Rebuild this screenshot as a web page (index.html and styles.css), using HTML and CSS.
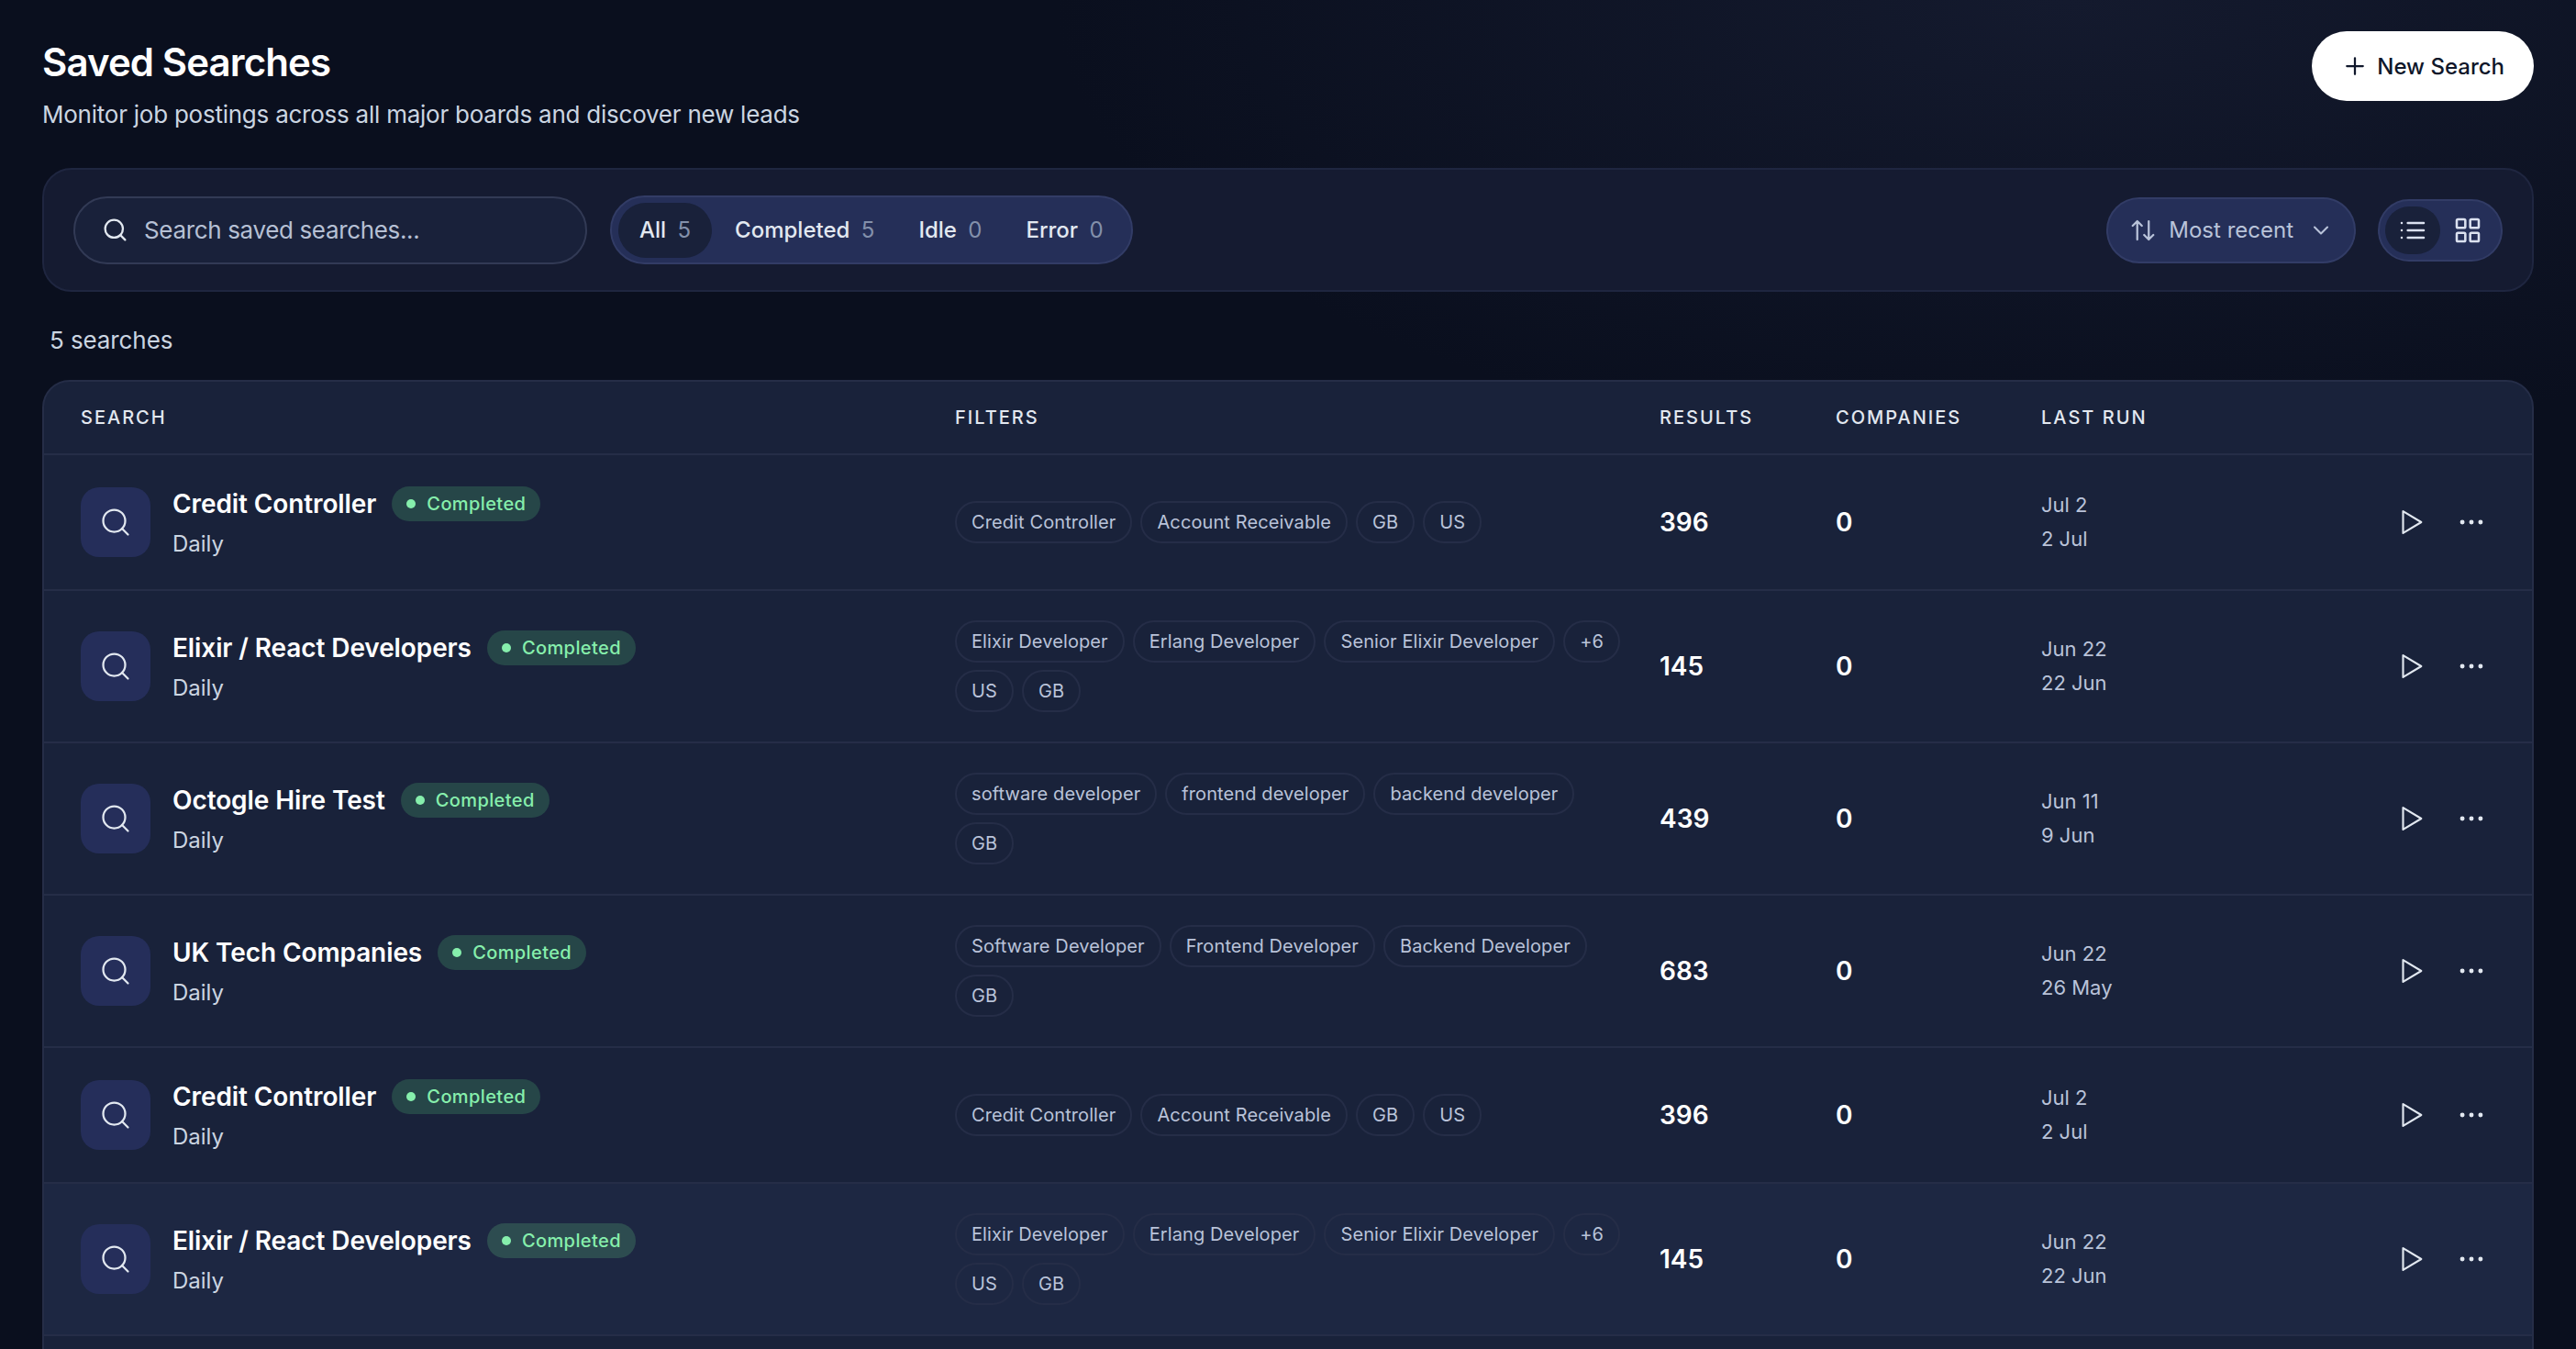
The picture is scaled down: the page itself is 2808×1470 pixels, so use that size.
FILE: index.html
```html
<!DOCTYPE html>
<html lang="en">
<head>
    <meta charset="UTF-8">
    <title>Saved Searches</title>
    <link rel="stylesheet" href="styles.css">
</head>
<body>
    <svg class="sprite" xmlns="http://www.w3.org/2000/svg">
        <symbol id="i-search" viewBox="0 0 24 24"><circle cx="11" cy="11" r="8"/><path d="m21 21-4.3-4.3"/></symbol>
        <symbol id="i-play" viewBox="0 0 24 24"><path d="M6 3.6 20 12 6 20.4z"/></symbol>
        <symbol id="i-more" viewBox="0 0 24 24"><circle cx="5" cy="12" r="1"/><circle cx="12" cy="12" r="1"/><circle cx="19" cy="12" r="1"/></symbol>
    </svg>

    <div class="page">
        <header class="page-head">
            <div>
                <h1 class="page-title">Saved Searches</h1>
                <p class="page-sub">Monitor job postings across all major boards and discover new leads</p>
            </div>
            <button class="new-btn">
                <svg class="icon icon-new" viewBox="0 0 24 24"><path d="M5 12h14M12 5v14"/></svg>
                New Search
            </button>
        </header>

        <section class="toolbar">
            <div class="toolbar-left">
                <label class="search-box">
                    <svg class="icon icon-search"><use href="#i-search"/></svg>
                    <span>Search saved searches...</span>
                </label>
                <div class="tabs">
                    <button class="tab active">All <span class="tab-count">5</span></button>
                    <button class="tab">Completed <span class="tab-count">5</span></button>
                    <button class="tab">Idle <span class="tab-count">0</span></button>
                    <button class="tab">Error <span class="tab-count">0</span></button>
                </div>
            </div>
            <div class="toolbar-right">
                <button class="sort-btn">
                    <svg class="icon icon-sort" viewBox="0 0 24 24"><path d="m21 16-4 4-4-4M17 20V4M3 8l4-4 4 4M7 4v16"/></svg>
                    <span>Most recent</span>
                    <svg class="icon icon-chev" viewBox="0 0 24 24"><path d="m6 9 6 6 6-6"/></svg>
                </button>
                <div class="view-toggle">
                    <button class="view-btn active">
                        <svg class="icon icon-view" viewBox="0 0 24 24"><path d="M3 6h.01M3 12h.01M3 18h.01M8 6h13M8 12h13M8 18h13"/></svg>
                    </button>
                    <button class="view-btn">
                        <svg class="icon icon-view" viewBox="0 0 24 24"><rect x="3" y="3" width="7" height="7" rx="1"/><rect x="14" y="3" width="7" height="7" rx="1"/><rect x="3" y="14" width="7" height="7" rx="1"/><rect x="14" y="14" width="7" height="7" rx="1"/></svg>
                    </button>
                </div>
            </div>
        </section>

        <p class="count">5 searches</p>

        <section class="table">
            <div class="row head">
                <div>SEARCH</div>
                <div>FILTERS</div>
                <div>RESULTS</div>
                <div>COMPANIES</div>
                <div>LAST RUN</div>
                <div></div>
            </div>

            <div class="row">
                <div class="cell-search">
                    <div class="search-icon"><svg class="icon icon-row"><use href="#i-search"/></svg></div>
                    <div>
                        <div class="name-line"><span class="name">Credit Controller</span><span class="badge"><i class="dot"></i>Completed</span></div>
                        <div class="freq">Daily</div>
                    </div>
                </div>
                <div class="chips">
                    <span class="chip">Credit Controller</span><span class="chip">Account Receivable</span><span class="chip">GB</span><span class="chip">US</span>
                </div>
                <div class="num">396</div>
                <div class="num">0</div>
                <div class="dates"><div>Jul 2</div><div>2 Jul</div></div>
                <div class="actions">
                    <svg class="icon icon-play"><use href="#i-play"/></svg>
                    <svg class="icon icon-more"><use href="#i-more"/></svg>
                </div>
            </div>

            <div class="row">
                <div class="cell-search">
                    <div class="search-icon"><svg class="icon icon-row"><use href="#i-search"/></svg></div>
                    <div>
                        <div class="name-line"><span class="name">Elixir / React Developers</span><span class="badge"><i class="dot"></i>Completed</span></div>
                        <div class="freq">Daily</div>
                    </div>
                </div>
                <div class="chips">
                    <span class="chip">Elixir Developer</span><span class="chip">Erlang Developer</span><span class="chip">Senior Elixir Developer</span><span class="chip">+6</span><span class="chip">US</span><span class="chip">GB</span>
                </div>
                <div class="num">145</div>
                <div class="num">0</div>
                <div class="dates"><div>Jun 22</div><div>22 Jun</div></div>
                <div class="actions">
                    <svg class="icon icon-play"><use href="#i-play"/></svg>
                    <svg class="icon icon-more"><use href="#i-more"/></svg>
                </div>
            </div>

            <div class="row">
                <div class="cell-search">
                    <div class="search-icon"><svg class="icon icon-row"><use href="#i-search"/></svg></div>
                    <div>
                        <div class="name-line"><span class="name">Octogle Hire Test</span><span class="badge"><i class="dot"></i>Completed</span></div>
                        <div class="freq">Daily</div>
                    </div>
                </div>
                <div class="chips">
                    <span class="chip">software developer</span><span class="chip">frontend developer</span><span class="chip">backend developer</span><span class="chip">GB</span>
                </div>
                <div class="num">439</div>
                <div class="num">0</div>
                <div class="dates"><div>Jun 11</div><div>9 Jun</div></div>
                <div class="actions">
                    <svg class="icon icon-play"><use href="#i-play"/></svg>
                    <svg class="icon icon-more"><use href="#i-more"/></svg>
                </div>
            </div>

            <div class="row">
                <div class="cell-search">
                    <div class="search-icon"><svg class="icon icon-row"><use href="#i-search"/></svg></div>
                    <div>
                        <div class="name-line"><span class="name">UK Tech Companies</span><span class="badge"><i class="dot"></i>Completed</span></div>
                        <div class="freq">Daily</div>
                    </div>
                </div>
                <div class="chips">
                    <span class="chip">Software Developer</span><span class="chip">Frontend Developer</span><span class="chip">Backend Developer</span><span class="chip">GB</span>
                </div>
                <div class="num">683</div>
                <div class="num">0</div>
                <div class="dates"><div>Jun 22</div><div>26 May</div></div>
                <div class="actions">
                    <svg class="icon icon-play"><use href="#i-play"/></svg>
                    <svg class="icon icon-more"><use href="#i-more"/></svg>
                </div>
            </div>

            <div class="row">
                <div class="cell-search">
                    <div class="search-icon"><svg class="icon icon-row"><use href="#i-search"/></svg></div>
                    <div>
                        <div class="name-line"><span class="name">Credit Controller</span><span class="badge"><i class="dot"></i>Completed</span></div>
                        <div class="freq">Daily</div>
                    </div>
                </div>
                <div class="chips">
                    <span class="chip">Credit Controller</span><span class="chip">Account Receivable</span><span class="chip">GB</span><span class="chip">US</span>
                </div>
                <div class="num">396</div>
                <div class="num">0</div>
                <div class="dates"><div>Jul 2</div><div>2 Jul</div></div>
                <div class="actions">
                    <svg class="icon icon-play"><use href="#i-play"/></svg>
                    <svg class="icon icon-more"><use href="#i-more"/></svg>
                </div>
            </div>

            <div class="row hover">
                <div class="cell-search">
                    <div class="search-icon"><svg class="icon icon-row"><use href="#i-search"/></svg></div>
                    <div>
                        <div class="name-line"><span class="name">Elixir / React Developers</span><span class="badge"><i class="dot"></i>Completed</span></div>
                        <div class="freq">Daily</div>
                    </div>
                </div>
                <div class="chips">
                    <span class="chip">Elixir Developer</span><span class="chip">Erlang Developer</span><span class="chip">Senior Elixir Developer</span><span class="chip">+6</span><span class="chip">US</span><span class="chip">GB</span>
                </div>
                <div class="num">145</div>
                <div class="num">0</div>
                <div class="dates"><div>Jun 22</div><div>22 Jun</div></div>
                <div class="actions">
                    <svg class="icon icon-play"><use href="#i-play"/></svg>
                    <svg class="icon icon-more"><use href="#i-more"/></svg>
                </div>
            </div>
        </section>
    </div>
</body>
</html>
```

FILE: styles.css
```css
* {
    margin: 0;
    padding: 0;
    box-sizing: border-box;
}

html, body {
    height: 100vh;
    overflow: hidden;
}

body {
    font-family: Inter, "Noto Sans", sans-serif;
    background: radial-gradient(ellipse 1100px 500px at 2250px 0, #141a2e 0%, rgba(20, 26, 46, 0) 100%), #0a0f1e;
    color: #e2e8f0;
}

button {
    font-family: inherit;
    border: none;
    background: none;
    color: inherit;
}

.sprite {
    display: none;
}

.icon {
    display: block;
    fill: none;
    stroke: currentColor;
    stroke-width: 2;
    stroke-linecap: round;
    stroke-linejoin: round;
    flex-shrink: 0;
}

.page {
    padding: 34px 46px 0 46px;
}

.page-head {
    display: flex;
    justify-content: space-between;
    align-items: flex-start;
    height: 149px;
}

.page-title {
    font-size: 42px;
    font-weight: 600;
    line-height: 68px;
    letter-spacing: -0.9px;
    color: #fff;
}

.page-sub {
    font-size: 26px;
    line-height: 40px;
    margin-top: 3px;
    letter-spacing: -0.24px;
    color: #cbd5e1;
}

.new-btn {
    display: flex;
    align-items: center;
    gap: 9px;
    height: 76px;
    padding: 0 32px;
    border-radius: 38px;
    background: #fff;
    color: #0f172a;
    font-size: 24px;
    font-weight: 500;
}

.icon-new {
    width: 30px;
    height: 30px;
    stroke-width: 1.8;
}

.toolbar {
    display: flex;
    justify-content: space-between;
    align-items: center;
    height: 135px;
    padding: 0 32px;
    background: #151b31;
    border: 2px solid #1f2640;
    border-radius: 32px;
}

.toolbar-left,
.toolbar-right {
    display: flex;
    align-items: center;
}

.toolbar-left {
    gap: 25px;
}

.toolbar-right {
    gap: 24px;
}

.search-box {
    display: flex;
    align-items: center;
    gap: 17px;
    width: 560px;
    height: 74px;
    padding: 0 29px;
    background: #19213a;
    border: 2px solid #323a55;
    border-radius: 37px;
    font-size: 26px;
    letter-spacing: -0.35px;
    color: #b6c0d4;
}

.icon-search {
    width: 29px;
    height: 29px;
    stroke-width: 1.9;
    color: #e2e8f0;
}

.tabs {
    display: flex;
    align-items: center;
    gap: 2px;
    height: 75px;
    padding: 0 7px;
    background: #252f58;
    border: 2px solid #323c66;
    border-radius: 38px;
}

.tab {
    height: 60px;
    padding: 0 23px;
    border-radius: 30px;
    font-size: 24px;
    font-weight: 500;
    color: #e2e8f0;
    white-space: nowrap;
}

.tab.active {
    background: #19213a;
}

.tab-count {
    margin-left: 6px;
    font-weight: 400;
    color: #8390ab;
}

.sort-btn {
    display: flex;
    align-items: center;
    height: 72px;
    padding: 0 22px 0 23px;
    background: #252f58;
    border: 2px solid #323c66;
    border-radius: 36px;
    font-size: 24px;
    color: #b9c3d9;
}

.icon-sort {
    width: 30px;
    height: 30px;
    margin-right: 13px;
    stroke-width: 1.8;
}

.icon-chev {
    width: 28px;
    height: 28px;
    margin-left: 16px;
    stroke-width: 1.8;
}

.view-toggle {
    display: flex;
    align-items: center;
    height: 68px;
    padding: 0 6px;
    background: #252f58;
    border: 2px solid #323c66;
    border-radius: 34px;
}

.view-btn {
    display: flex;
    align-items: center;
    justify-content: center;
    width: 60px;
    height: 52px;
    border-radius: 26px;
    color: #dbe1f0;
}

.view-btn.active {
    background: #19213a;
}

.icon-view {
    width: 32px;
    height: 32px;
    stroke-width: 1.9;
}

.count {
    margin: 34px 0 24px 8px;
    font-size: 26px;
    line-height: 38px;
    letter-spacing: -0.1px;
    color: #cbd5e1;
}

.table {
    min-height: 1100px;
    background: #19223a;
    border: 2px solid #252d47;
    border-radius: 30px;
    overflow: hidden;
}

.row {
    display: grid;
    grid-template-columns: 953px 768px 192px 224px 1fr 120px;
    align-items: center;
    padding: 32px 49px 32px 40px;
    border-bottom: 2px solid #252d47;
}

.row.head {
    height: 80px;
    padding-top: 0;
    padding-bottom: 0;
    font-size: 20px;
    font-weight: 500;
    letter-spacing: 2px;
    color: #e2e8f0;
}

.row.hover {
    background: #1d2742;
}

.cell-search {
    display: flex;
    align-items: center;
    gap: 24px;
}

.search-icon {
    display: flex;
    align-items: center;
    justify-content: center;
    width: 76px;
    height: 76px;
    border-radius: 20px;
    background: #252e5a;
    color: #e2e8f0;
}

.icon-row {
    width: 36px;
    height: 36px;
    stroke-width: 1.5;
}

.name-line {
    display: flex;
    align-items: center;
    gap: 17px;
    height: 40px;
    margin-top: 1px;
}

.name {
    font-size: 28px;
    font-weight: 600;
    letter-spacing: -0.1px;
    color: #fff;
    white-space: nowrap;
}

.badge {
    display: flex;
    align-items: center;
    gap: 12px;
    height: 38px;
    padding: 0 16px;
    border-radius: 19px;
    background: #264648;
    color: #86efac;
    font-size: 20px;
    font-weight: 500;
    letter-spacing: 0.4px;
}

.hover .badge {
    background: #2d4c50;
}

.dot {
    width: 10px;
    height: 10px;
    border-radius: 50%;
    background: #86efac;
}

.freq {
    margin-top: 7px;
    font-size: 24px;
    line-height: 34px;
    color: #cbd5e1;
}

.chips {
    display: flex;
    flex-wrap: wrap;
    gap: 8px 9px;
    max-width: 740px;
}

.chip {
    display: flex;
    align-items: center;
    height: 46px;
    padding: 0 16px;
    border: 2px solid #252d47;
    border-radius: 23px;
    font-size: 20px;
    letter-spacing: 0.1px;
    color: #b9c3d9;
    white-space: nowrap;
}

.num {
    font-size: 28px;
    font-weight: 600;
    color: #fff;
}

.dates {
    font-size: 22px;
    line-height: 37px;
    color: #b9c3d9;
}

.actions {
    display: flex;
    align-items: center;
    justify-content: flex-end;
    gap: 32px;
    color: #e2e8f0;
}

.icon-play {
    width: 34px;
    height: 34px;
    stroke-width: 1.5;
}

.icon-more {
    width: 34px;
    height: 34px;
    stroke-width: 1.5;
    fill: currentColor;
}
```
